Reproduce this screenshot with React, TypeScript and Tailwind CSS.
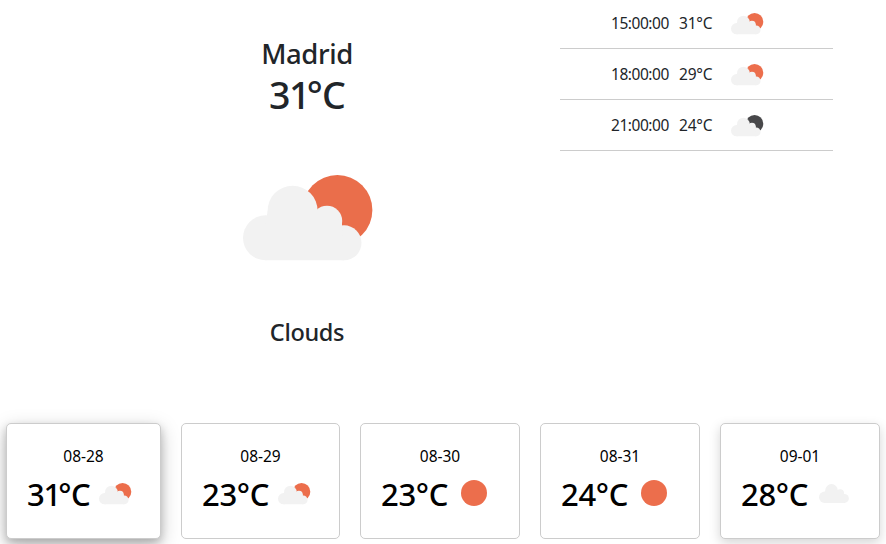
import React from "react";

const SUN = "#ec6e4c";
const MOON = "#48484a";

type IconKind = "sunCloud" | "moonCloud" | "sun" | "cloud";

function CloudShape() {
  return (
    <g fill="#f2f2f2">
      <circle cx="22.5" cy="62.8" r="22.5" />
      <circle cx="49.6" cy="35.8" r="25" />
      <circle cx="84" cy="46" r="15.2" />
      <circle cx="101" cy="67.8" r="17.5" />
      <path d="M24.6 36H74.6L99 46V50.3L101 85.3H22.5V50Z" />
    </g>
  );
}

function PartlyCloudy({ className, color }: { className: string; color: string }) {
  return (
    <svg viewBox="0 0 129.4 85.4" className={`overflow-visible ${className}`}>
      <circle cx="94.4" cy="35" r="35" fill={color} />
      <CloudShape />
    </svg>
  );
}

function SmallIcon({ kind }: { kind: IconKind }) {
  if (kind === "sun") {
    return (
      <svg viewBox="0 0 26 26" className="h-[26px] w-[26px]">
        <circle cx="13" cy="13" r="13" fill={SUN} />
      </svg>
    );
  }
  if (kind === "cloud") {
    return (
      <svg viewBox="0 10.8 119 74.6" className="h-[19px] w-[30px]">
        <CloudShape />
      </svg>
    );
  }
  return <PartlyCloudy className="h-[21.3px] w-[32.3px]" color={kind === "sunCloud" ? SUN : MOON} />;
}

const hours: { time: string; temp: string; kind: IconKind }[] = [
  { time: "15:00:00", temp: "31°C", kind: "sunCloud" },
  { time: "18:00:00", temp: "29°C", kind: "sunCloud" },
  { time: "21:00:00", temp: "24°C", kind: "moonCloud" },
];

const days: { date: string; temp: string; kind: IconKind; box: string; tempPad: string; iconPad: string }[] = [
  { date: "08-28", temp: "31°C", kind: "sunCloud", box: "w-[155px] shadow-[0_4px_8px_rgba(0,0,0,0.2),0_6px_20px_rgba(0,0,0,0.22)]", tempPad: "pl-[20px] w-[92px]", iconPad: "pt-[7px]" },
  { date: "08-29", temp: "23°C", kind: "sunCloud", box: "ml-5 w-[159px]", tempPad: "pl-[20px] w-[96px]", iconPad: "pt-[7px]" },
  { date: "08-30", temp: "23°C", kind: "sun", box: "ml-5 w-[160px]", tempPad: "pl-[20px] w-[100px]", iconPad: "pt-1" },
  { date: "08-31", temp: "24°C", kind: "sun", box: "ml-5 w-[160px]", tempPad: "pl-[20px] w-[100px]", iconPad: "pt-1" },
  { date: "09-01", temp: "28°C", kind: "cloud", box: "ml-5 w-[160px] shadow-[0_4px_12px_rgba(0,0,0,0.17)]", tempPad: "pl-[20px] w-[98px]", iconPad: "pt-2" },
];

// "1" has wide side bearings, so its neighbours are pulled closer.
function LargeTemp({ value }: { value: string }) {
  if (value[1] !== "1") return <>{value}</>;
  return (
    <>
      <span className="tracking-[-0.04em]">{value[0]}</span>
      <span className="tracking-[-0.1em]">1</span>
      {value.slice(2)}
    </>
  );
}

export default function App() {
  return (
    <div className="flex h-[544px] w-[886px] flex-col overflow-hidden bg-white font-['Noto_Sans','Open_Sans',sans-serif] text-[#212529]">
      <div className="flex h-[423px]">
        <section className="ml-[207px] flex w-[200px] flex-col items-center pt-[37px]">
          <h2 className="text-[27.5px] leading-[34px] font-medium tracking-[-0.4px]">Madrid</h2>
          <h1 className="text-[37.5px] leading-[48px] font-medium tracking-[-0.8px]">
            <LargeTemp value="31°C" />
          </h1>
          <PartlyCloudy className="mt-[56px] ml-px h-[85.4px] w-[129.4px]" color="#ea6e4b" />
          <h3 className="mt-[57px] text-[23.5px] leading-[30px] font-medium tracking-[-0.35px]">Clouds</h3>
        </section>
        <section className="ml-[153px] w-[273px] shrink-0">
          {hours.map((h, i) => (
            <div
              key={h.time}
              className={`flex border-b border-[#cccccc] pl-[51px] text-[15.5px] leading-6 tracking-[-0.45px] ${i === 0 ? "h-[49px] pt-[11px]" : "h-[51px] pt-[13px]"}`}
            >
              <span className="w-[68px]">{h.time}</span>
              <span className="w-[52px] tracking-[-0.2px]">{h.temp}</span>
              <span className="pt-0.5">
                <SmallIcon kind={h.kind} />
              </span>
            </div>
          ))}
        </section>
      </div>
      <section className="flex pl-1.5 text-black">
        {days.map((d) => (
          <article key={d.date} className={`h-[116px] shrink-0 rounded-[5px] border border-[#cccccc] bg-white pt-5 ${d.box}`}>
            <p className="text-center text-[15.5px] leading-6">{d.date}</p>
            <div className="mt-2 flex">
              <span className={`shrink-0 text-[31px] leading-[36px] font-medium tracking-[-0.3px] whitespace-nowrap ${d.tempPad}`}>
                <LargeTemp value={d.temp} />
              </span>
              <span className={d.iconPad}>
                <SmallIcon kind={d.kind} />
              </span>
            </div>
          </article>
        ))}
      </section>
    </div>
  );
}
